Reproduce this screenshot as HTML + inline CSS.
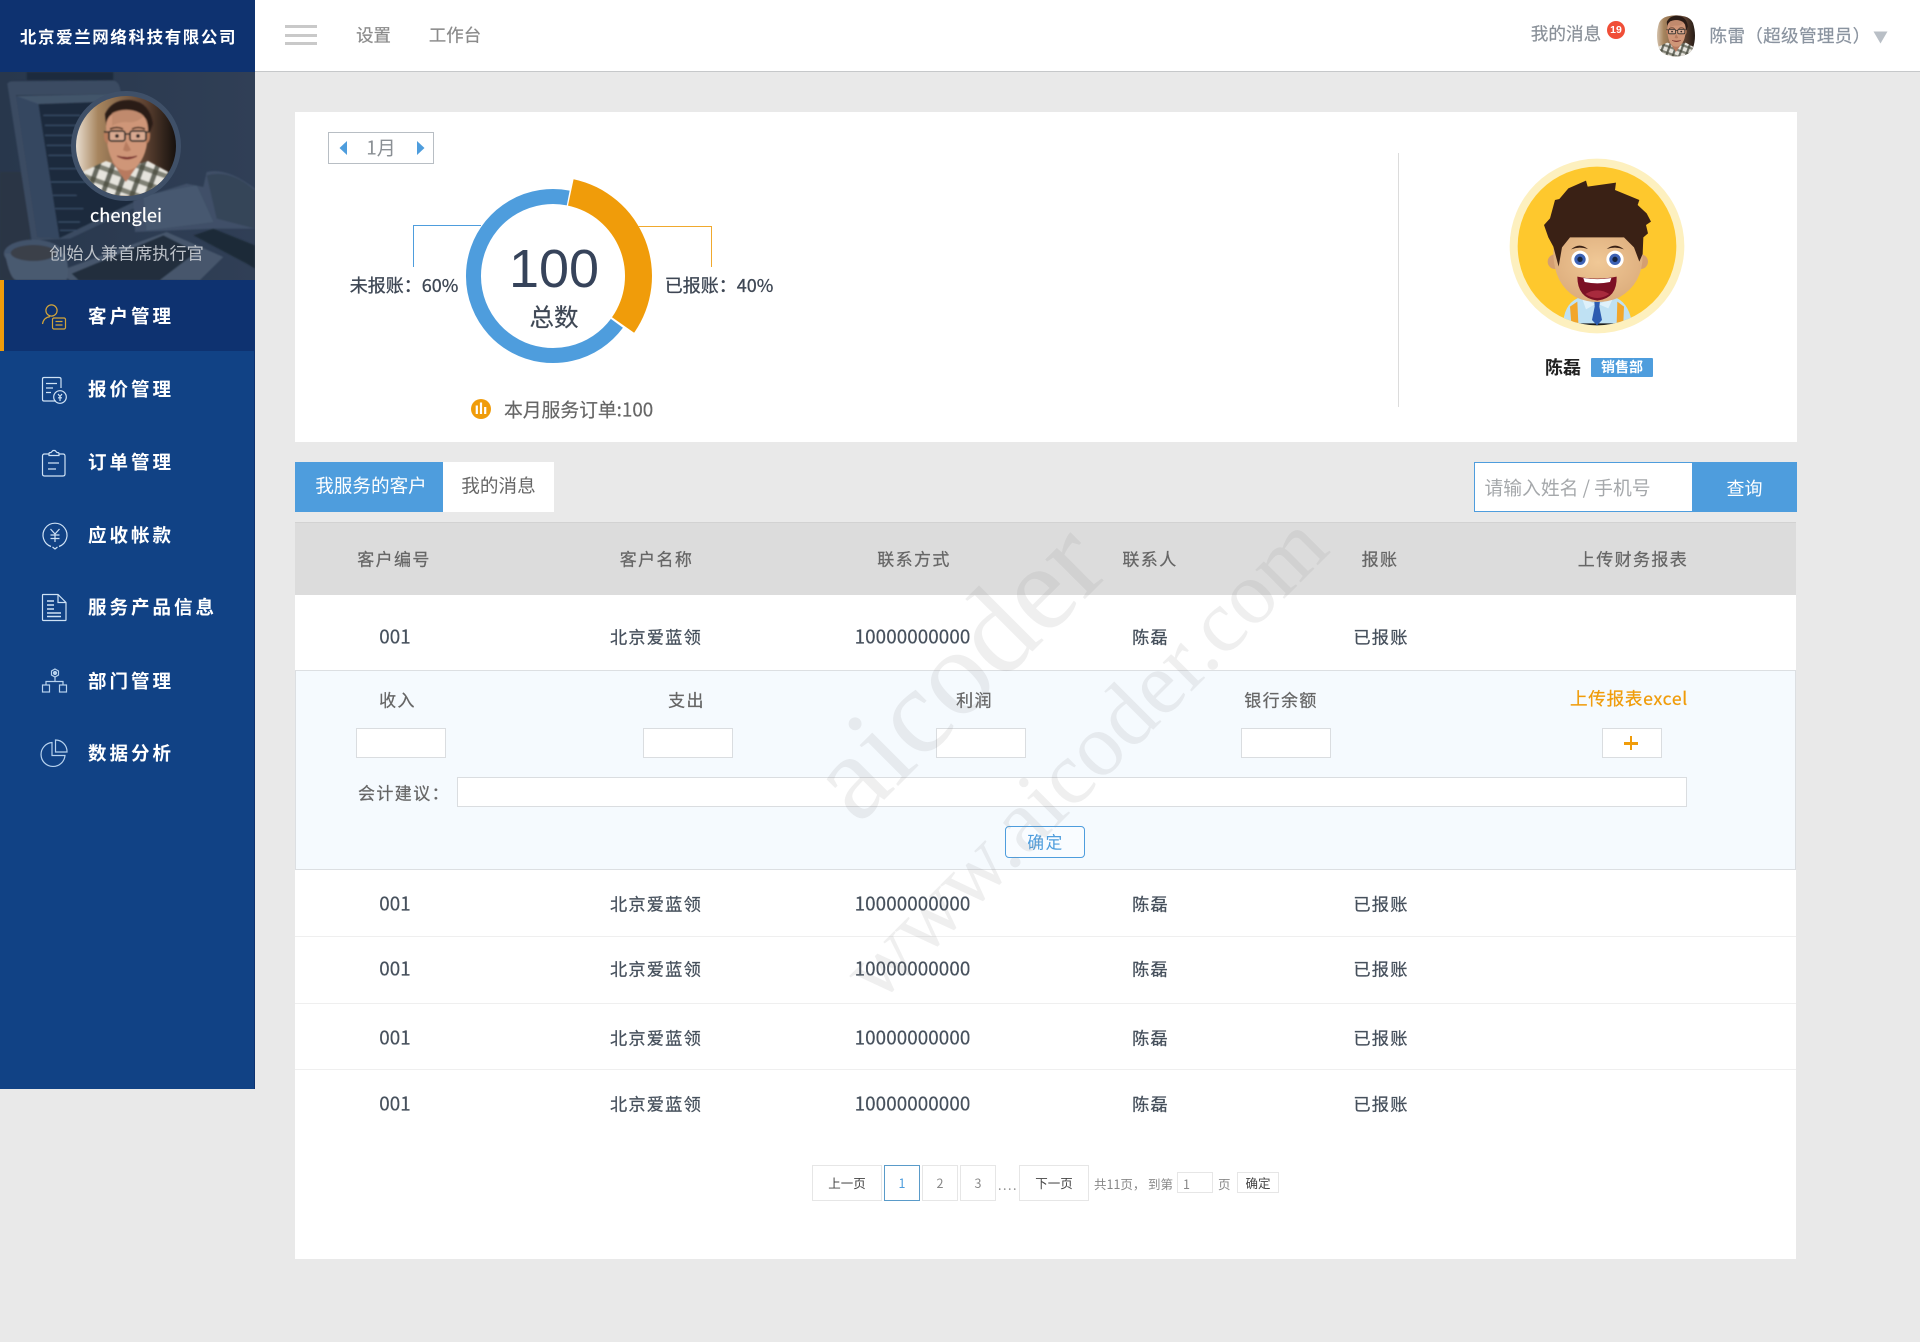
<!DOCTYPE html>
<html lang="zh-CN"><head><meta charset="utf-8"><title>客户管理</title>
<style>
*{box-sizing:border-box;margin:0;padding:0}
html,body{width:1920px;height:1342px;overflow:hidden;background:#e9e9e9;font-family:"Liberation Sans","Noto Sans CJK SC",sans-serif}
.a{position:absolute}
.c,.l{position:absolute;white-space:nowrap;line-height:1;font-family:"Noto Sans CJK SC","Liberation Sans",sans-serif}
.c{transform:translate(-50%,-50%)}
.l{transform:translateY(-50%)}
.m{font-size:18.500px;letter-spacing:3px;color:#fff;font-weight:bold;left:88px}
.h{font-size:17px;letter-spacing:1.4px;color:#666;-webkit-text-stroke:.25px #666}
.r{font-size:17.200px;letter-spacing:1.200px;color:#46505c;-webkit-text-stroke:.25px #46505c}
.n{font-size:18.800px;letter-spacing:.1px;color:#46505c;-webkit-text-stroke:.2px #46505c}
.f{font-size:17px;letter-spacing:1.400px;color:#666;-webkit-text-stroke:.25px #666}
.i{position:absolute;background:#fff;border:1px solid #dadde0}
.p{position:absolute;top:1165px;height:36px;border:1px solid #e6e6e6;background:#fff;font-size:12.500px;color:#444;text-align:center;line-height:34px;font-family:"Noto Sans CJK SC",sans-serif}
.g{font-size:12.500px;color:#888}
.sep{position:absolute;left:295px;width:1501px;height:1px;background:#efefef}
svg.ic{position:absolute;left:40px;width:30px;height:30px;fill:none;stroke:#cfe2f5;stroke-width:1.200}
</style></head><body>

<!-- sidebar -->
<div class="a" style="left:0;top:0;width:255px;height:1089px;background:#114285;border-right:1px solid #0d3270"></div>
<div class="a" style="left:0;top:0;width:255px;height:72px;background:#0e3270"></div>
<div class="c" style="left:128.500px;top:35.500px;font-size:16.500px;letter-spacing:1.600px;color:#fff;font-weight:bold">北京爱兰网络科技有限公司</div>

<svg class="a" style="left:0;top:72px" width="255" height="208" viewBox="0 0 765 624">
<defs>
<linearGradient id="bg" x1="0" x2="1" y1="0" y2="0"><stop offset="0" stop-color="#28374c"/><stop offset="1" stop-color="#303f56"/></linearGradient>
<filter id="b1"><feGaussianBlur stdDeviation="2"/></filter>
</defs>
<rect width="765" height="624" fill="url(#bg)"/>
<g filter="url(#b1)">
<rect x="80" y="0" width="260" height="25" fill="#1f2c3e"/>
<rect x="0" y="300" width="90" height="324" fill="#2a3444"/>
<path d="M22 36Q24 28 40 28L340 26Q358 28 362 60L420 400L210 500L95 505Z" fill="#3b4b62"/>
<path d="M48 70L340 66L412 385L180 498L112 495Z" fill="#1f2c3e"/>
<path d="M48 72L115 95L178 498L112 495Z" fill="#354660"/>
<path d="M48 72L340 66L345 88L115 96Z" fill="#43546b"/>
<g stroke="#3a506c" stroke-width="3">
<path d="M130 130H240M135 160H270M135 190H220M140 220H290M145 250H230M148 290H250M152 330H280M158 370H230M165 410H250M175 450H240M180 475H230"/>
</g>
<path d="M400 385L560 335L610 345L620 300Q680 285 765 350V470H640L405 480Z" fill="#3f5068"/>
<path d="M430 370L590 340L640 450L440 475Z" fill="#465870"/>
<path d="M620 310Q690 290 765 355V470L650 440Z" fill="#354559"/>
<path d="M580 490L640 470L765 520V590L740 575Z" fill="#1f2a39"/>
<path d="M170 600L500 480L670 555L600 624H210Z" fill="#46566c"/>
<path d="M215 605L490 490L590 540L480 624H235Z" fill="#212d3d"/>
<ellipse cx="100" cy="545" rx="88" ry="42" fill="#43526a"/>
<path d="M15 545Q30 624 50 624H200Q210 590 195 545Z" fill="#4a5a70"/>
<ellipse cx="100" cy="543" rx="68" ry="24" fill="#3a3f48"/>
</g>
</svg>

<svg width="0" height="0" style="position:absolute">
<defs>
<symbol id="man" viewBox="0 0 100 100">
<defs>
<linearGradient id="wall" x1="0" x2="1" y1="0" y2="0"><stop offset="0" stop-color="#e8ddcf"/><stop offset=".22" stop-color="#a7855e"/><stop offset=".7" stop-color="#5b4030"/><stop offset="1" stop-color="#16110e"/></linearGradient>
<clipPath id="cc"><circle cx="50" cy="50" r="50"/></clipPath>
<pattern id="plaid" width="14" height="14" patternUnits="userSpaceOnUse" patternTransform="rotate(20)"><rect width="14" height="14" fill="#e6e4dd"/><rect width="5" height="14" fill="#3c4238" opacity=".75"/><rect width="14" height="5" fill="#4a4c3e" opacity=".65"/></pattern>
<filter id="sb" x="-10%" y="-10%" width="120%" height="120%"><feGaussianBlur stdDeviation=".7"/></filter>
</defs>
<g clip-path="url(#cc)"><rect width="100" height="100" fill="url(#wall)"/>
<g filter="url(#sb)">
<path d="M0 100L6 76L30 65L50 72L72 65L96 78L100 100Z" fill="url(#plaid)"/>
<path d="M36 66L50 86L64 66L62 58H38Z" fill="#b87a5e"/>
<path d="M29 18Q36 3 54 4Q74 6 77 28L73 38L71 24Q60 14 50 16Q40 14 33 22L31 38Z" fill="#2c1b15"/>
<path d="M30 30Q31 14 52 14Q72 15 72 34Q72 60 60 71Q50 78 41 71Q30 60 30 30Z" fill="#cf9678"/>
<path d="M36 17Q52 9 68 20Q60 28 50 26Q42 26 36 30Z" fill="#b98468" opacity=".7"/>
<path d="M28 36Q27 46 32 48V36ZM74 36Q75 46 70 48V36Z" fill="#b87c5c"/>
<rect x="33" y="35" width="16" height="10" rx="2.500" fill="#f3e3d8" fill-opacity=".25" stroke="#2e2d2b" stroke-width="1.800"/>
<rect x="54" y="35" width="16" height="10" rx="2.500" fill="#f3e3d8" fill-opacity=".25" stroke="#2e2d2b" stroke-width="1.800"/>
<path d="M49 38H54M28 36H33M70 36H74" stroke="#2e2d2b" stroke-width="1.500"/>
<circle cx="41" cy="40" r="1.900" fill="#2b2320"/><circle cx="62" cy="40" r="1.900" fill="#2b2320"/>
<path d="M34 33Q41 30 47 33M56 33Q62 30 69 33" stroke="#3c281e" stroke-width="1.500" fill="none"/>
<path d="M50 45L47 54Q51 57 55 54Z" fill="#b67c60"/>
<path d="M41 60Q51 66 61 60Q51 63 41 60Z" fill="#7c3430" stroke="#7c3430"/>
</g></g>
</symbol>
</defs></svg>

<div class="a" style="left:71px;top:91px;width:110px;height:110px;border-radius:50%;background:#3f5068"></div>
<svg class="a" style="left:76px;top:96px" width="100" height="100"><use href="#man" width="100" height="100"/></svg>
<div class="c" style="left:126px;top:215px;font-size:18.200px;color:#fff;-webkit-text-stroke:.2px #fff">chenglei</div>
<div class="c" style="left:126.500px;top:251.500px;font-size:17.200px;color:#bcc1c8">创始人兼首席执行官</div>

<div class="a" style="left:0;top:280px;width:255px;height:71px;background:#0e3270"></div>
<div class="a" style="left:0;top:280px;width:3.500px;height:71px;background:#f09c0a"></div>

<div class="l m" style="top:316px">客户管理</div>
<div class="l m" style="top:389px">报价管理</div>
<div class="l m" style="top:462px">订单管理</div>
<div class="l m" style="top:535px">应收帐款</div>
<div class="l m" style="top:607px">服务产品信息</div>
<div class="l m" style="top:681px">部门管理</div>
<div class="l m" style="top:753px">数据分析</div>

<svg class="ic" style="top:302px;stroke:#d3a53a" viewBox="0 0 30 30"><circle cx="11.500" cy="8.500" r="5.600"/><path d="M2.500 22Q3.500 15.500 10 14.600"/><rect x="12.500" y="16" width="13" height="11" rx="1.500"/><path d="M15.500 19.500H22.500M15.500 23H22.500"/></svg>
<svg class="ic" style="top:375px" viewBox="0 0 30 30"><path d="M16 26H4Q2.500 26 2.500 24.500V4Q2.500 2.500 4 2.500H19Q21 2.500 21 4V13"/><path d="M6 8.500H17M6 13H13M6 17.500H11"/><circle cx="20" cy="22" r="6.300"/><path d="M18 19L20 21.500L22 19M20 21.500V26M18 22.800H22"/></svg>
<svg class="ic" style="top:449px" viewBox="0 0 30 30"><path d="M9 5H4.500Q2.500 5 2.500 7V25Q2.500 27 4.500 27H23Q25 27 25 25V7Q25 5 23 5H19"/><path d="M9 6.500V4.500Q9 3.500 11 3.500L13 1.500H15L17 3.500Q19 3.500 19 4.500V6.500Z"/><path d="M8 14H19M8 20H16"/></svg>
<svg class="ic" style="top:520px" viewBox="0 0 30 30"><path d="M11 26.500A12 12 0 1 1 19 26.500"/><path d="M12.500 27L15 29L17.500 27"/><path d="M10.500 9L15 14L19.500 9M15 14V22M10.500 15H19.500M10.500 18.500H19.500"/></svg>
<svg class="ic" style="top:593px" viewBox="0 0 30 30"><path d="M18 1.500H3Q2.500 1.500 2.500 2.500V26.500Q2.500 27.500 3.500 27.500H25.500Q26 27.500 26 26.500V9.500Z"/><path d="M18 1.500V9.500H26"/><path d="M7 8H14M7 12H14M7 16H14M7 20H21M7 23.500H21" stroke-width="1.500"/></svg>
<svg class="ic" style="top:666px;stroke:#b7d2ee" viewBox="0 0 30 30"><path d="M15 3L18.500 5V9L15 11L11.500 9V5Z"/><circle cx="15" cy="7" r="1.500" fill="#b7d2ee"/><path d="M15 11V15M6 19V15.500H23V19"/><rect x="2.500" y="19" width="7" height="7"/><rect x="19.500" y="19" width="7" height="7"/></svg>
<svg class="ic" style="top:738px;stroke:#b7d2ee" viewBox="0 0 30 30"><path d="M12 4.500A12 12 0 1 0 25 17.500H12Z"/><path d="M15.500 2A11.500 11.500 0 0 1 27 14H15.500Z"/></svg>

<!-- header -->
<div class="a" style="left:255px;top:0;width:1665px;height:72px;background:#fff;border-bottom:1px solid #c6c8ca"></div>
<div class="a" style="left:285px;top:25px;width:32px;height:3px;background:#c9c9c9"></div>
<div class="a" style="left:285px;top:33.500px;width:32px;height:3px;background:#c9c9c9"></div>
<div class="a" style="left:285px;top:41.500px;width:32px;height:3px;background:#c9c9c9"></div>
<div class="c" style="left:373.500px;top:34.500px;font-size:17.400px;color:#8b8b8b;-webkit-text-stroke:.2px #8b8b8b">设置</div>
<div class="c" style="left:455px;top:34.500px;font-size:17.400px;color:#8b8b8b;-webkit-text-stroke:.2px #8b8b8b">工作台</div>
<div class="c" style="left:1566px;top:34px;font-size:17.600px;color:#8a9199;-webkit-text-stroke:.2px #8a9199">我的消息</div>
<div class="a" style="left:1607px;top:21px;width:18px;height:18px;border-radius:50%;background:#f04e37;color:#fff;font-size:10.500px;font-weight:bold;text-align:center;line-height:18px">19</div>
<svg class="a" style="left:1656px;top:15px" width="40" height="42" viewBox="0 0 40 42"><defs><clipPath id="hx"><path d="M11 1.500Q20 -1 29 1.500Q35 3 37 8Q41 21 37 33Q35 38 29 40Q20 43 11 40Q5 38 3 33Q-1 21 3 8Q5 3 11 1.500Z"/></clipPath></defs><g clip-path="url(#hx)"><use href="#man" x="-2" y="-1" width="44" height="44"/></g></svg>
<div class="c" style="left:1790px;top:35.500px;font-size:17.600px;letter-spacing:.3px;color:#8a939f;-webkit-text-stroke:.2px #8a939f">陈雷（超级管理员）</div>
<svg class="a" style="left:1873px;top:31px" width="15" height="13"><path d="M0.500 0.500H14.500L7.500 12.500Z" fill="#b9bfc6"/></svg>

<!-- top card -->
<div class="a" style="left:295px;top:112px;width:1502px;height:330px;background:#fff"></div>
<div class="a" style="left:328px;top:132px;width:106px;height:32px;border:1px solid #b8bec4"></div>
<svg class="a" style="left:338px;top:140px" width="90" height="16"><path d="M9 1V15L1.500 8Z" fill="#4e9ddd"></path><path d="M79 1V15L86.500 8Z" fill="#4e9ddd"></path></svg>
<div class="c" style="left:381px;top:146.500px;font-size:19px;color:#8a8f94">1月</div>

<svg class="a" style="left:295px;top:112px" width="600" height="320" viewBox="295 112 600 320">
<path d="M616.900 323.300A79.500 79.500 0 1 1 568.200 198" fill="none" stroke="#4e9ddd" stroke-width="15"/>
<path d="M573.600 179.200A99 99 0 0 1 634.100 332.800L612 317.300A72 72 0 0 0 568 205.600Z" fill="#f09c0a"/>
<path d="M413.500 267V225.500H481" fill="none" stroke="#4e9ddd" stroke-width="1"/>
<path d="M638 226.500H711.500V267" fill="none" stroke="#f0a92e" stroke-width="1"/>
<circle cx="481" cy="409" r="10" fill="#f09c0a"/>
<path d="M476.800 405.500V414M481 402.500V414M485.200 407V414" stroke="#fff" stroke-width="2.200"/>
</svg>
<div class="c" style="left:404px;top:285px;font-size:18px;color:#3e4754;-webkit-text-stroke:.3px #3e4754">未报账：60%</div>
<div class="c" style="left:719px;top:285px;font-size:18px;color:#3e4754;-webkit-text-stroke:.3px #3e4754">已报账：40%</div>
<div class="c" style="left:554px;top:269px;font-size:54px;color:#36435a;font-family:'Liberation Sans',sans-serif">100</div>
<div class="c" style="left:554px;top:317px;font-size:24.500px;color:#3e4754;-webkit-text-stroke:.2px #3e4754">总数</div>
<div class="l" style="left:504px;top:409.500px;font-size:18.800px;color:#666;-webkit-text-stroke:.2px #666">本月服务订单:100</div>

<div class="a" style="left:1398px;top:153px;width:1px;height:254px;background:#dcdcdc"></div>
<svg class="a" style="left:1500px;top:150px" width="190" height="190" viewBox="0 0 570 570">
<defs><clipPath id="boy"><circle cx="291" cy="288" r="238"/></clipPath>
<radialGradient id="sk" cx=".5" cy=".4" r=".7"><stop offset="0" stop-color="#f0c896"/><stop offset="1" stop-color="#d9a878"/></radialGradient></defs>
<circle cx="291" cy="288" r="262" fill="#fdf0bf"/><circle cx="291" cy="288" r="238" fill="#fec82d"/>
<g clip-path="url(#boy)">
<path d="M190 515Q195 455 245 440H340Q385 455 395 515V560H190Z" fill="#bfe1f3"/>
<path d="M210 470L232 455L235 520H214ZM372 470L352 455L350 520H370Z" fill="#f2a62a"/>
<path d="M225 520H365V560H225Z" fill="#1d1d1d"/>
<path d="M245 442L290 465L340 442L325 475L290 460L258 478Z" fill="#dff1fa"/>
<path d="M283 452H300L298 470L306 510L291 526L276 510L284 470Z" fill="#2d5cb0"/>
<circle cx="165" cy="335" r="22" fill="#d49f72"/><circle cx="422" cy="335" r="22" fill="#d49f72"/>
<path d="M160 300Q165 265 205 258H380Q425 265 428 310Q430 400 358 442Q292 470 228 442Q158 400 160 300Z" fill="url(#sk)"/>
<path d="M132 225L150 205L165 150L178 147L205 115L258 92L263 110L348 98L345 120L418 150L413 165L440 190L453 215L438 225L444 250L430 262L428 312L418 335L402 292L372 262H210L186 292L176 350L160 290L145 262Z" fill="#3a2115"/>
<path d="M213 298Q238 276 264 297Q238 288 213 298ZM320 297Q346 276 372 298Q346 288 320 297Z" fill="#3a2115"/>
<circle cx="240" cy="328" r="26" fill="#fff"/><circle cx="345" cy="328" r="26" fill="#fff"/>
<circle cx="240" cy="328" r="17" fill="#3d62b4"/><circle cx="345" cy="328" r="17" fill="#3d62b4"/>
<circle cx="240" cy="328" r="8" fill="#14233f"/><circle cx="345" cy="328" r="8" fill="#14233f"/>
<path d="M232 380Q292 392 350 380Q352 445 292 452Q232 445 232 380Z" fill="#7c1024"/>
<path d="M250 384Q292 391 334 384L330 396Q292 404 254 396Z" fill="#fff"/>
<path d="M256 432Q292 410 328 432Q292 456 256 432Z" fill="#a82a3d"/>
</g></svg>
<div class="c" style="left:1563px;top:367px;font-size:18px;color:#222;font-weight:bold">陈磊</div>
<div class="a" style="left:1591px;top:358px;width:62px;height:19px;background:#4e9ddd;border-radius:1px"></div>
<div class="c" style="left:1622px;top:367px;font-size:14px;color:#fff;font-weight:bold">销售部</div>

<!-- tabs / search -->
<div class="a" style="left:295px;top:462px;width:148px;height:50px;background:#4e9ddd"></div>
<div class="a" style="left:443px;top:462px;width:111px;height:50px;background:#fff"></div>
<div class="c" style="left:371px;top:486px;font-size:18.600px;color:#fff">我服务的客户</div>
<div class="c" style="left:498.500px;top:486px;font-size:18.600px;color:#666">我的消息</div>
<div class="a" style="left:1474px;top:462px;width:219px;height:50px;background:#fff;border:1px solid #4e9ddd"></div>
<div class="a" style="left:1692px;top:462px;width:105px;height:50px;background:#4e9ddd"></div>
<div class="l" style="left:1484.500px;top:487.500px;font-size:18.800px;color:#a5a8ab">请输入姓名 / 手机号</div>
<div class="c" style="left:1744.500px;top:487.500px;font-size:18px;color:#fff">查询</div>

<!-- table -->
<div class="a" style="left:295px;top:522px;width:1501px;height:737px;background:#fff"></div>
<div class="a" style="left:295px;top:522px;width:1501px;height:73px;background:#dcdcdc;border-top:1px solid #d2d2d2"></div>
<div class="c h" style="left:394px;top:558px">客户编号</div>
<div class="c h" style="left:656.500px;top:558px">客户名称</div>
<div class="c h" style="left:914px;top:558px">联系方式</div>
<div class="c h" style="left:1150px;top:558px">联系人</div>
<div class="c h" style="left:1380px;top:558px">报账</div>
<div class="c h" style="left:1633px;top:558px">上传财务报表</div>

<div class="c n" style="left:395px;top:636.500px">001</div><div class="c r" style="left:656px;top:636px">北京爱蓝领</div><div class="c n" style="left:912.500px;top:636.500px">10000000000</div><div class="c r" style="left:1150.500px;top:636px">陈磊</div><div class="c r" style="left:1381px;top:636px">已报账</div>

<div class="a" style="left:295px;top:670px;width:1501px;height:200px;background:#f5fafe;border:1px solid #dcdfe2"></div>
<div class="c f" style="left:397.500px;top:699px">收入</div>
<div class="c f" style="left:686.500px;top:699px">支出</div>
<div class="c f" style="left:974.500px;top:699px">利润</div>
<div class="c f" style="left:1281px;top:699px">银行余额</div>
<div class="c" style="left:1629px;top:698.500px;font-size:17.600px;color:#f09c0a;letter-spacing:.7px;-webkit-text-stroke:.25px #f09c0a">上传报表excel</div>
<div class="i" style="left:356px;top:728px;width:90px;height:30px"></div>
<div class="i" style="left:643px;top:728px;width:90px;height:30px"></div>
<div class="i" style="left:936px;top:728px;width:90px;height:30px"></div>
<div class="i" style="left:1241px;top:728px;width:90px;height:30px"></div>
<div class="i" style="left:1602px;top:728px;width:60px;height:30px"></div>
<div class="a" style="left:1624px;top:742px;width:14px;height:2.500px;background:#f09c0a"></div>
<div class="a" style="left:1629.700px;top:736px;width:2.500px;height:14px;background:#f09c0a"></div>
<div class="l f" style="left:358px;top:792px">会计建议：</div>
<div class="i" style="left:457px;top:777px;width:1230px;height:30px"></div>
<div class="a" style="left:1005px;top:826px;width:80px;height:32px;border:1px solid #4e9ddd;border-radius:4px;background:#f9fcff"></div>
<div class="c" style="left:1045.500px;top:842px;font-size:16.800px;letter-spacing:1.500px;color:#4e9ddd">确定</div>

<div class="c n" style="left:395px;top:903.500px">001</div><div class="c r" style="left:656px;top:903px">北京爱蓝领</div><div class="c n" style="left:912.500px;top:903.500px">10000000000</div><div class="c r" style="left:1150.500px;top:903px">陈磊</div><div class="c r" style="left:1381px;top:903px">已报账</div>
<div class="sep" style="top:936px"></div>
<div class="c n" style="left:395px;top:968.500px">001</div><div class="c r" style="left:656px;top:968px">北京爱蓝领</div><div class="c n" style="left:912.500px;top:968.500px">10000000000</div><div class="c r" style="left:1150.500px;top:968px">陈磊</div><div class="c r" style="left:1381px;top:968px">已报账</div>
<div class="sep" style="top:1003px"></div>
<div class="c n" style="left:395px;top:1037.500px">001</div><div class="c r" style="left:656px;top:1037px">北京爱蓝领</div><div class="c n" style="left:912.500px;top:1037.500px">10000000000</div><div class="c r" style="left:1150.500px;top:1037px">陈磊</div><div class="c r" style="left:1381px;top:1037px">已报账</div>
<div class="sep" style="top:1069px"></div>
<div class="c n" style="left:395px;top:1103.500px">001</div><div class="c r" style="left:656px;top:1103px">北京爱蓝领</div><div class="c n" style="left:912.500px;top:1103.500px">10000000000</div><div class="c r" style="left:1150.500px;top:1103px">陈磊</div><div class="c r" style="left:1381px;top:1103px">已报账</div>

<!-- pagination -->
<div class="p" style="left:812px;width:70px">上一页</div>
<div class="p" style="left:884px;width:36px;border-color:#5a9bc9;color:#4e9ddd">1</div>
<div class="p" style="left:922px;width:36px;color:#888">2</div>
<div class="p" style="left:960px;width:36px;color:#888">3</div>
<div class="c g" style="left:1008px;top:1185px;letter-spacing:1.500px">....</div>
<div class="p" style="left:1019px;width:70px">下一页</div>
<div class="l g" style="left:1094px;top:1184px">共11页，</div>
<div class="l g" style="left:1148px;top:1184px">到第</div>
<div class="a" style="left:1177px;top:1172px;width:36px;height:21px;border:1px solid #e6e6e6;background:#fff"></div>
<div class="l g" style="left:1183px;top:1184px">1</div>
<div class="l g" style="left:1218px;top:1184px">页</div>
<div class="a" style="left:1237px;top:1172px;width:42px;height:21px;border:1px solid #e6e6e6;background:#fff"></div>
<div class="c" style="left:1258px;top:1183px;font-size:12.500px;color:#444">确定</div>

<!-- watermark -->
<svg class="a" style="left:0;top:0;pointer-events:none" width="1920" height="1342">
<text transform="translate(858 826) rotate(-45)" font-family="Liberation Serif" font-size="122" fill="#8c8c8c" fill-opacity=".14">aicoder</text>
<text transform="translate(878 1005) rotate(-45)" font-family="Liberation Serif" font-size="89" fill="#8c8c8c" fill-opacity=".14">www.aicoder.com</text>
</svg>
</body></html>
